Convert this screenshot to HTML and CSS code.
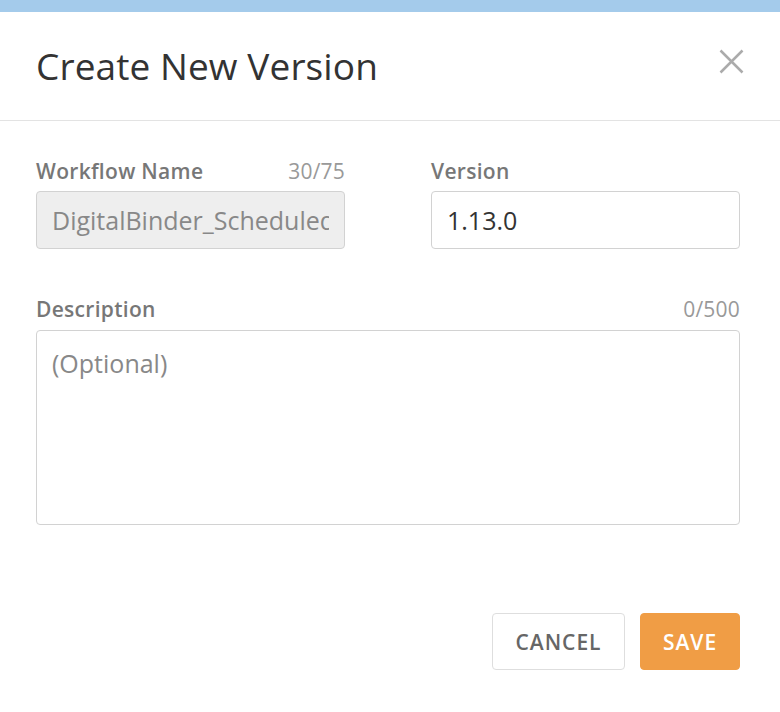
FILE: index.html
```html
<!DOCTYPE html>
<html lang="en">
<head>
<meta charset="utf-8">
<title>Create New Version</title>
<link rel="stylesheet" href="styles.css">
</head>
<body>
<div class="topbar"></div>
<div class="dialog">
  <header class="header">
    <h1 class="title">Create New Version</h1>
    <button class="close" aria-label="Close">
      <svg width="25" height="25" viewBox="0 0 25 25"><path d="M1.5 1.5 L23.5 23.5 M23.5 1.5 L1.5 23.5" stroke="#ababab" stroke-width="2.5" fill="none"/></svg>
    </button>
  </header>
  <div class="body">
    <div class="row">
      <div class="field">
        <div class="label-row"><span class="label">Workflow Name</span><span class="count">30/75</span></div>
        <div class="input disabled"><span class="value">DigitalBinder_ScheduledReports</span></div>
      </div>
      <div class="field">
        <div class="label-row"><span class="label">Version</span></div>
        <div class="input"><span class="value dark">1.13.0</span></div>
      </div>
    </div>
    <div class="field desc">
      <div class="label-row"><span class="label">Description</span><span class="count">0/500</span></div>
      <div class="textarea"><span class="placeholder">(Optional)</span></div>
    </div>
  </div>
  <footer class="footer">
    <button class="btn cancel">CANCEL</button>
    <button class="btn save">SAVE</button>
  </footer>
</div>
</body>
</html>
```
FILE: styles.css
```css
* { box-sizing: border-box; }
html, body { margin: 0; padding: 0; background: #fff; }
body {
  font-family: "Open Sans", "Noto Sans", sans-serif;
  width: 780px;
  height: 712px;
  overflow: hidden;
}
.topbar { height: 12px; background: #a4cbeb; }
.header {
  height: 109px;
  border-bottom: 1px solid #e3e3e3;
  display: flex;
  align-items: center;
  justify-content: space-between;
  padding: 0 36px 0 36px;
}
.title {
  margin: 0;
  font-size: 37px;
  font-weight: 400;
  color: #333;
  letter-spacing: 0.1px;
  line-height: 48px;
}
.close {
  align-self: flex-start;
  margin-top: 37px;
  border: 0;
  background: none;
  padding: 0;
  width: 25px;
  height: 25px;
  display: flex;
}
.body {
  padding: 38px 40px 0 36px;
}
.row {
  display: flex;
  gap: 86px;
}
.field { flex: 1; min-width: 0; }
.label-row {
  display: flex;
  justify-content: space-between;
  align-items: center;
  height: 24px;
  margin-bottom: 8px;
}
.label {
  font-size: 21px;
  font-weight: 600;
  color: #777;
  letter-spacing: 0.3px;
}
.count {
  font-size: 21px;
  color: #999;
  letter-spacing: 0.2px;
}
.input {
  height: 58px;
  border: 1px solid #d2d2d2;
  border-radius: 4px;
  padding: 0 15px;
  display: flex;
  align-items: center;
}
.input.disabled { background: #eeeeee; }
.value {
  flex: 1;
  min-width: 0;
  overflow: hidden;
  white-space: nowrap;
  font-size: 25px;
  color: #888;
}
.value.dark { color: #333; }
.desc { margin-top: 48px; }
.desc .label-row { margin-bottom: 9px; }
.textarea {
  height: 195px;
  border: 1px solid #d2d2d2;
  border-radius: 4px;
  padding: 15px 15px;
  line-height: 34px;
}
.placeholder { font-size: 25px; color: #888; }
.footer {
  display: flex;
  justify-content: flex-end;
  gap: 15px;
  padding: 88px 40px 0 0;
}
.btn {
  height: 57px;
  border-radius: 4px;
  font-family: "Open Sans", "Noto Sans", sans-serif;
  font-size: 21px;
  font-weight: 600;
  letter-spacing: 1px;
  cursor: pointer;
}
.cancel {
  width: 133px;
  background: #fff;
  border: 1px solid #dedede;
  color: #666;
}
.save {
  width: 100px;
  background: #f09d45;
  border: 1px solid #f09d45;
  color: #fff;
}
```
